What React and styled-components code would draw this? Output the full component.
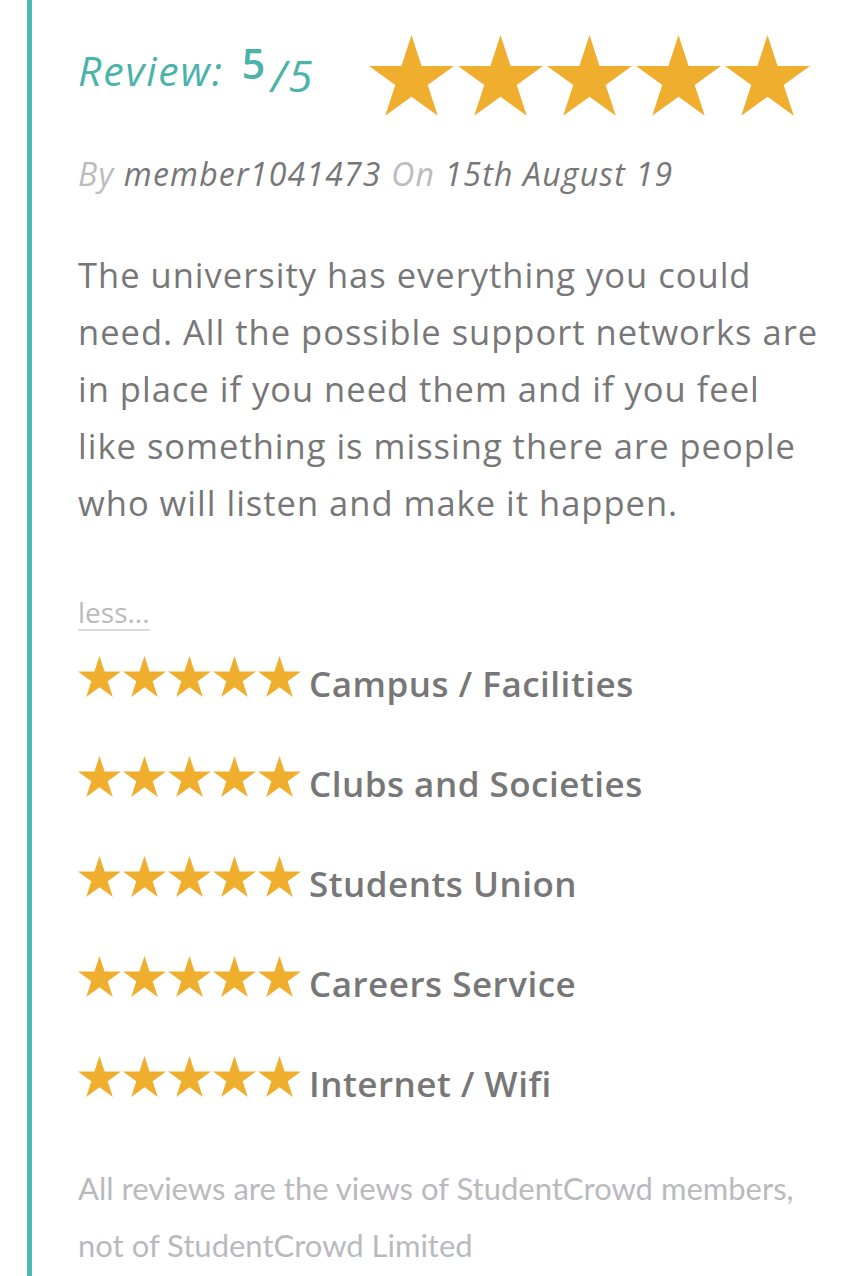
import React from 'react';
import styled, {createGlobalStyle} from 'styled-components';

const GlobalStyle = createGlobalStyle`
    body {
        margin: 0;
        background: #fff;
        font-family: "Open Sans", Lato, sans-serif;
    }
`;

const Page = styled.div`
    padding-left: 27px;
    min-height: 1276px;
    box-sizing: border-box;
`;

const Card = styled.div`
    border-left: 5px solid #4dbab2;
    padding: 35px 38px 20px 46px;
    min-height: 1276px;
    box-sizing: border-box;
`;

const Header = styled.div`
    display: flex;
    align-items: center;
    justify-content: space-between;
    padding-right: 9px;
`;

const Score = styled.div`
    color: #4bb3a9;
    font-size: 41px;
    letter-spacing: 1.8px;
    font-style: italic;
    display: flex;
    align-items: center;
    margin-top: -10px;
`;

const ScoreValue = styled.span`
    font-style: normal;
    font-weight: 600;
    position: relative;
    top: -7px;
    margin-left: 18px;
    margin-right: 4px;
`;

const ScoreMax = styled.span`
    font-size: 44px;
    position: relative;
    top: 5px;
`;

const Stars = styled.div`
    display: flex;
    gap: ${p => p.gap}px;
`;

const Byline = styled.div`
    margin-top: 38px;
    font-size: 32px;
    letter-spacing: 1.2px;
    line-height: 40px;
    font-style: italic;
    color: #777;
`;

const Faint = styled.span`
    color: #bbbcbf;
`;

const Body = styled.p`
    margin: 52px 0 0;
    font-size: 34.5px;
    letter-spacing: 1px;
    line-height: 57px;
    color: #777;
    white-space: nowrap;
`;

const Less = styled.a`
    display: inline-block;
    margin-top: 64px;
    font-size: 28px;
    line-height: 34px;
    color: #b9babd;
    border-bottom: 2px solid #dcdcdc;
    text-decoration: none;
`;

const Ratings = styled.div`
    margin-top: 25px;
    display: flex;
    flex-direction: column;
    gap: 60px;
`;

const Row = styled.div`
    display: flex;
    align-items: baseline;
    gap: 8px;
    height: 40px;
`;

const Label = styled.span`
    font-size: 35px;
    letter-spacing: 0.5px;
    line-height: 40px;
    font-weight: 600;
    color: #777;
`;

const Footer = styled.div`
    margin-top: 64px;
    font-family: Lato, sans-serif;
    font-size: 31px;
    line-height: 57px;
    color: #b9babd;
`;

const starPoints = (() => {
    const pts = [];
    for (let i = 0; i < 10; i++) {
        const r = i % 2 === 0 ? 100 : 38.2;
        const a = (-90 + i * 36) * Math.PI / 180;
        pts.push(`${(95.1 + r * Math.cos(a)).toFixed(1)},${(100 + r * Math.sin(a)).toFixed(1)}`);
    }
    return pts.join(' ');
})();

const Star = ({width}) => (
    <svg width={width} height={width * 180.9 / 190.2} viewBox="0 0 190.2 180.9">
        <polygon points={starPoints} fill="#f0ae2f"/>
    </svg>
);

const StarRow = ({size, gap}) => (
    <Stars gap={gap}>
        {[0, 1, 2, 3, 4].map(i => <Star key={i} width={size}/>)}
    </Stars>
);

const categories = [
    'Campus / Facilities',
    'Clubs and Societies',
    'Students Union',
    'Careers Service',
    'Internet / Wifi',
];

const reviewLines = [
    'The university has everything you could',
    'need. All the possible support networks are',
    'in place if you need them and if you feel',
    'like something is missing there are people',
    'who will listen and make it happen.',
];

export default function App() {
    return (
        <Page>
            <GlobalStyle/>
            <Card>
                <Header>
                    <Score>
                        Review:
                        <ScoreValue>5</ScoreValue>
                        <ScoreMax>/5</ScoreMax>
                    </Score>
                    <StarRow size={85} gap={4}/>
                </Header>
                <Byline>
                    <Faint>By</Faint> member1041473 <Faint>On</Faint> 15th August 19
                </Byline>
                <Body>
                    {reviewLines.map((l, i) => (
                        <React.Fragment key={i}>{l}{i < reviewLines.length - 1 && <br/>}</React.Fragment>
                    ))}
                </Body>
                <Less href="#">less...</Less>
                <Ratings>
                    {categories.map(c => (
                        <Row key={c}>
                            <StarRow size={43} gap={2}/>
                            <Label>{c}</Label>
                        </Row>
                    ))}
                </Ratings>
                <Footer>
                    All reviews are the views of StudentCrowd members,<br/>
                    not of StudentCrowd Limited
                </Footer>
            </Card>
        </Page>
    );
}
